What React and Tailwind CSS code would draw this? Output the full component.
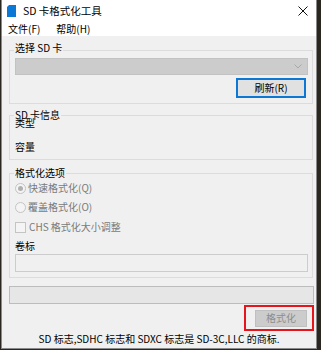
import React from "react";

const font = { fontFamily: '"Noto Sans CJK SC", "Noto Sans", sans-serif' };

function Radio({ checked, label }) {
  return (
    <div className="flex items-center h-[14px] gap-[2px]">
      <span className="w-[11px] h-[11px] rounded-full border border-[#c4c4c4] bg-[#f4f4f4] flex items-center justify-center">
        {checked && <span className="w-[5px] h-[5px] rounded-full bg-[#b0b0b0]" />}
      </span>
      <span className="text-[#7a7a7a] leading-[14px]">{label}</span>
    </div>
  );
}

export default function App() {
  return (
    <div className="w-[321px] h-[350px] bg-[#2a2721] flex" style={font}>
      <div className="ml-[1px] w-[316px] h-[349px] bg-[#f0f0f0] border-x border-b border-[#8a8a8a] flex flex-col text-[10px] text-black">
        {/* Title bar */}
        <div className="h-[22px] bg-white flex items-center shrink-0">
          <svg width="9" height="12" viewBox="0 0 9 12" className="ml-[5px]">
            <path d="M2 0 H9 V12 H0 V2 Z" fill="#0a78d4" />
          </svg>
          <span className="ml-[7px] text-[10.5px] leading-[14px]">SD 卡格式化工具</span>
          <svg width="10" height="10" viewBox="0 0 10 10" className="ml-auto mr-[8px]">
            <path d="M0.5 0.5 L9.5 9.5 M9.5 0.5 L0.5 9.5" stroke="#111" strokeWidth="1" />
          </svg>
        </div>
        {/* Menu bar */}
        <div className="h-[14px] bg-white flex items-center shrink-0 pl-[6px] gap-[16px]">
          <span className="leading-[14px]">文件(F)</span>
          <span className="leading-[14px]">帮助(H)</span>
        </div>
        {/* Body */}
        <div className="flex flex-col pl-[7px] pr-[2px]">
          {/* Group 1 */}
          <fieldset className="mt-[8px] mr-[1px] border border-[#dcdcdc] pl-[5px] pr-[4px] pb-[5px]">
            <legend className="-ml-[1px] px-[1px] leading-[12px]">
              <span className="relative -top-[2px]">选择 SD 卡</span>
            </legend>
            <div className="mt-[2px] h-[17px] bg-[#cccccc] border border-[#c2c2c2] flex items-center justify-end pr-[5px]">
              <svg width="8" height="5" viewBox="0 0 8 5">
                <path d="M0.5 0.5 L4 4 L7.5 0.5" fill="none" stroke="#a8a8a8" strokeWidth="1" />
              </svg>
            </div>
            <div className="flex justify-end mt-[3px] pr-[2px]">
              <div className="w-[70px] h-[20px] bg-[#e1e1e1] border-2 border-[#0a78d4] flex items-center justify-center leading-[12px]">
                刷新(R)
              </div>
            </div>
          </fieldset>
          {/* Group 2 */}
          <fieldset className="mt-[5px] mr-[1px] border border-[#dcdcdc] pl-[5px] pr-[4px] pb-[5px]">
            <legend className="-ml-[1px] px-[1px] leading-[12px]">SD 卡信息</legend>
            <div className="-mt-[5px] leading-[14px] h-[14px]">类型</div>
            <div className="mt-[10px] leading-[14px] h-[14px]">容量</div>
          </fieldset>
          {/* Group 3 */}
          <fieldset className="mt-[7px] mr-[1px] border border-[#dcdcdc] pl-[5px] pr-[4px] pb-[5px]">
            <legend className="-ml-[1px] px-[1px] leading-[12px]">格式化选项</legend>
            <div className="mt-[2px]">
              <Radio checked label="快速格式化(Q)" />
            </div>
            <div className="mt-[5px]">
              <Radio label="覆盖格式化(O)" />
            </div>
            <div className="mt-[6px] flex items-center h-[14px] gap-[3px]">
              <span className="w-[11px] h-[11px] border border-[#c4c4c4] bg-[#f4f4f4]" />
              <span className="text-[#7a7a7a] leading-[14px]">CHS 格式化大小调整</span>
            </div>
            <div className="mt-[5px] leading-[14px] h-[14px]">卷标</div>
            <div className="mt-[1px] h-[18px] border border-[#cccccc] bg-[#f0f0f0]" />
          </fieldset>
          {/* Progress bar */}
          <div className="mt-[8px] h-[18px] border border-[#bcbcbc] bg-[#e6e6e6]" />
          {/* Format button with red highlight */}
          <div className="mt-[1px] self-end w-[70px] h-[26px] border-2 border-[#e8141c] flex items-center pl-[9px] pr-[5px]">
            <div className="w-full h-[17px] bg-[#cccccc] border border-[#bfbfbf] flex items-center justify-center text-[#8d8d8d] leading-[12px]">
              格式化
            </div>
          </div>
          {/* Footer */}
          <div className="mt-[2px] text-center leading-[12px] -ml-[5px]">
            SD 标志,SDHC 标志和 SDXC 标志是 SD-3C,LLC 的商标.
          </div>
        </div>
      </div>
    </div>
  );
}
